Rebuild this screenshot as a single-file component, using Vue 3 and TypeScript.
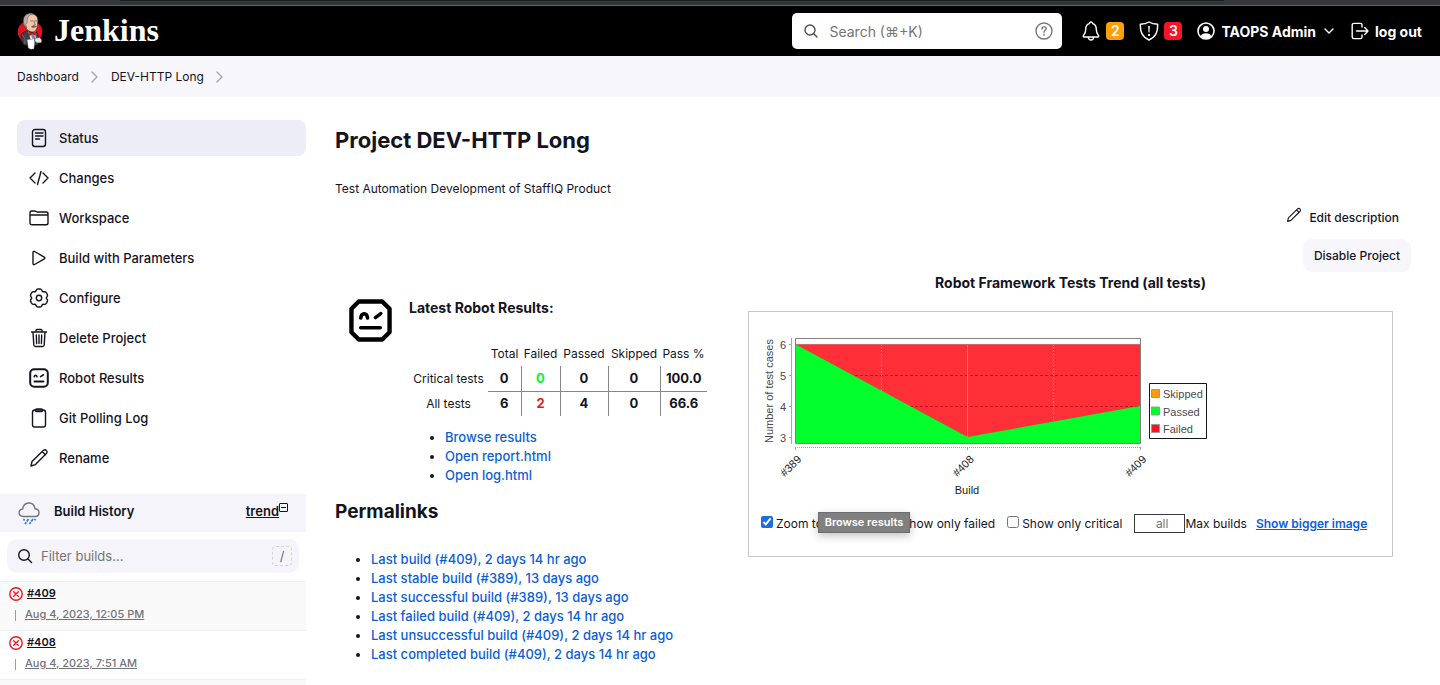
<script setup lang="ts">
import { ref } from 'vue'

interface Task {
  icon: string
  label: string
}

const tasks: Task[] = [
  { icon: 'status', label: 'Status' },
  { icon: 'changes', label: 'Changes' },
  { icon: 'folder', label: 'Workspace' },
  { icon: 'play', label: 'Build with Parameters' },
  { icon: 'gear', label: 'Configure' },
  { icon: 'trash', label: 'Delete Project' },
  { icon: 'robot', label: 'Robot Results' },
  { icon: 'clipboard', label: 'Git Polling Log' },
  { icon: 'pencil', label: 'Rename' },
]

const builds = [
  { id: '#409', date: 'Aug 4, 2023, 12:05 PM' },
  { id: '#408', date: 'Aug 4, 2023, 7:51 AM' },
]

const columns = ['Total', 'Failed', 'Passed', 'Skipped', 'Pass %']
const results = [
  { name: 'Critical tests', values: ['0', '0', '0', '0', '100.0'], tone: 'ok' },
  { name: 'All tests', values: ['6', '2', '4', '0', '66.6'], tone: 'bad' },
]

const reports = ['Browse results', 'Open report.html', 'Open log.html']

const permalinks = [
  'Last build (#409), 2 days 14 hr ago',
  'Last stable build (#389), 13 days ago',
  'Last successful build (#389), 13 days ago',
  'Last failed build (#409), 2 days 14 hr ago',
  'Last unsuccessful build (#409), 2 days 14 hr ago',
  'Last completed build (#409), 2 days 14 hr ago',
]

const zoomToChanges = ref(true)
const onlyFailed = ref(false)
const onlyCritical = ref(false)
const maxBuilds = ref('')

/* Trend chart geometry, in SVG units */
const plot = { left: 34, right: 379, top: 14, bottom: 119, step: 31, base: 113 }
const trend = [
  { build: '#389', passed: 6 },
  { build: '#408', passed: 3 },
  { build: '#409', passed: 4 },
]
const xAt = (i: number): number => plot.left + ((plot.right - plot.left) / 2) * i
const yAt = (n: number): number => plot.base - (n - 3) * plot.step
const passedArea =
  `${plot.left},${plot.bottom} ` +
  trend.map((t, i) => `${xAt(i)},${yAt(t.passed)}`).join(' ') +
  ` ${plot.right},${plot.bottom}`
const ticks = [6, 5, 4, 3]
const legend = [
  { name: 'Skipped', color: '#ff9b0a' },
  { name: 'Passed', color: '#00ff2b' },
  { name: 'Failed', color: '#fa1420' },
]

/* Six-lobed cog outline */
const gearPath =
  Array.from({ length: 90 }, (_, i) => {
    const a = (i / 90) * Math.PI * 2
    const r = 9 - 1.7 * Math.pow((1 + Math.cos(6 * a)) / 2, 3)
    return `${i ? 'L' : 'M'}${(10 + r * Math.cos(a)).toFixed(2)} ${(10 + r * Math.sin(a)).toFixed(2)}`
  }).join('') + 'Z'
</script>

<template>
  <div class="page">
    <div class="window-edge"><span></span></div>
    <header class="header">
      <a href="#" class="brand" aria-label="Jenkins home">
        <svg class="mascot" viewBox="0 0 78 112" aria-hidden="true">
          <ellipse cx="39" cy="57" rx="37" ry="35" fill="#e3121f" />
          <path d="M14 62 28 54 48 60 58 56 64 70 62 96 52 100 20 96 12 82Z" fill="#3d3f45" stroke="#17181b" stroke-width="2" />
          <path d="M32 54 44 66 56 52 58 74 50 84 40 78Z" fill="#e9edf2" />
          <path d="M42 66 52 64 55 78 47 80Z" fill="#7589a3" />
          <path d="M22 12C26 3 40-1 50 4 62 8 64 20 62 30L61 42C58 54 50 59 42 57 32 54 24 44 22 34Z" fill="#eec9a9" stroke="#4b3b35" stroke-width="2" />
          <path d="M22 12C28 2 40 0 48 3 38 5 33 9 31 18L30 30 26 34 30 45C20 40 16 24 22 12Z" fill="#b9b3ac" stroke="#56504c" stroke-width="1.500" />
          <path d="M41 24h7M53 24h6M51 27l4 8-5 2" fill="none" stroke="#5b463c" stroke-width="2" />
          <path d="M42 42c4-5 13-5 18-1-5 4-13 5-18 1Z" fill="#6b625e" />
          <path d="M35 56 46 61 57 56 58 68 47 64 36 69Z" fill="#e3121f" stroke="#6d0d13" stroke-width="1" />
          <path d="M31 81 53 79 51 108 42 110 34 106Z" fill="#fff" stroke="#96999e" stroke-width="1" />
          <path d="M55 76 68 74 75 82 73 90 62 91 54 86Z" fill="#e7e3df" stroke="#55524f" stroke-width="2" />
          <path d="M16 66 24 80 22 94M58 62 55 72" fill="none" stroke="#777b82" stroke-width="2" />
        </svg>
        <span class="brand-name">Jenkins</span>
      </a>
      <div class="header-tools">
        <label class="search">
          <svg viewBox="0 0 16 16" class="i16" aria-hidden="true"><circle cx="7" cy="7" r="5" /><path d="m11 11 3 3" /></svg>
          <input type="search" placeholder="Search (⌘+K)" aria-label="Search" />
          <svg viewBox="0 0 18 18" class="i18 help" aria-hidden="true"><circle cx="9" cy="9" r="8" /><path d="M7 7c0-3 4.200-2.700 4.200-.3C11.200 8.300 9 8.300 9 10.300M9 12.300v1" /></svg>
        </label>
        <a href="#" class="alert" aria-label="Notifications">
          <svg viewBox="0 0 18 20" class="bell" aria-hidden="true"><path d="M9 1C8 1 7.500 2 7.200 2.700 4.600 3.500 3.700 5.700 3.700 8.500 3.700 12 2.800 13 1.500 14.500 1 15.200 1.300 16 2.200 16h13.600c.9 0 1.200-.8.7-1.500C15.200 13 14.300 12 14.300 8.500c0-2.800-.9-5-3.500-5.800C10.500 2 10 1 9 1ZM6.300 16.200c.3 3.700 5.100 3.700 5.400 0" /></svg>
          <span class="count orange">2</span>
        </a>
        <a href="#" class="alert security" aria-label="Security warnings">
          <svg viewBox="0 0 20 20" class="i20" aria-hidden="true"><path d="M10 1C7.500 2.500 4.500 3.200 1.300 3.300c0 8 1.700 12.200 8.700 15.700 7-3.500 8.700-7.700 8.700-15.700C15.500 3.200 12.500 2.500 10 1Z" /><path d="M9.200 5h1.600l-.3 6.500h-1ZM9.100 13h1.800v1.900H9.100Z" class="solid" /></svg>
          <span class="count red">3</span>
        </a>
        <a href="#" class="user">
          <svg viewBox="0 0 18 18" class="i18" aria-hidden="true"><circle cx="9" cy="9" r="8" class="bold-ring" /><circle cx="9" cy="7" r="3" class="solid" /><path d="M3.700 14.500C4.500 10.300 13.500 10.300 14.300 14.500 11.500 17.500 6.500 17.500 3.700 14.500Z" class="solid" /></svg>
          <span>TAOPS Admin</span>
          <svg viewBox="0 0 10 10" class="chevron" aria-hidden="true"><path d="m1 3 4 4 4-4" /></svg>
        </a>
        <a href="#" class="logout">
          <svg viewBox="0 0 18 18" class="i18" aria-hidden="true"><path d="M11 5V3c0-1-.7-1.600-1.600-1.600H3c-1 0-1.800.7-1.800 1.600v12c0 1 .8 1.600 1.800 1.600h6.400c.9 0 1.600-.6 1.600-1.600v-2M5.500 9H17M13.700 5.500 17 9l-3.300 3.500" /></svg>
          <span>log out</span>
        </a>
      </div>
    </header>

    <nav class="crumbs" aria-label="Breadcrumb">
      <a href="#">Dashboard</a>
      <svg viewBox="0 0 8 12" aria-hidden="true"><path d="m1 1 5 5-5 5" /></svg>
      <a href="#">DEV-HTTP Long</a>
      <svg viewBox="0 0 8 12" aria-hidden="true"><path d="m1 1 5 5-5 5" /></svg>
    </nav>

    <div class="body">
      <aside class="side">
        <nav class="tasks" aria-label="Project">
          <a v-for="(t, i) in tasks" :key="t.label" href="#" class="task" :class="{ active: i === 0 }">
            <svg viewBox="0 0 20 20" class="i20" aria-hidden="true">
              <template v-if="t.icon === 'status'"><rect x="3.500" y="1.500" width="13" height="17" rx="2.500" /><path d="M6.500 5h7.500M6.500 8h7.500M6.500 11h4" /></template>
              <path v-else-if="t.icon === 'changes'" d="M6 5 1 10l5 5M14 5l5 5-5 5M12 3.500 8.500 16.500" />
              <path v-else-if="t.icon === 'folder'" d="M1 7V4.500C1 3.500 1.700 3 2.500 3h3.300c1.200 0 1.500 1 2.700 1h8.500c1.200 0 2 .7 2 1.700V15c0 1-.8 1.800-2 1.800H3c-1.200 0-2-.8-2-1.800V7h18" />
              <path v-else-if="t.icon === 'play'" d="M4 4.500v11c0 1 .8 1.400 1.600 1l9.700-5.600c.8-.5.8-1.300 0-1.800L5.600 3.500C4.800 3.100 4 3.500 4 4.500Z" />
              <template v-else-if="t.icon === 'gear'"><path :d="gearPath" /><circle cx="10" cy="10" r="2.700" /></template>
              <path v-else-if="t.icon === 'trash'" d="M2.500 4h15M4 4l.8 13c.1 1 .8 1.500 1.700 1.500h7c.9 0 1.600-.5 1.700-1.500L16 4M7 4V2.500c0-.6.4-1 1-1h4c.6 0 1 .4 1 1V4M7.300 7l.3 8.500M10 7v8.500M12.700 7l-.3 8.500" />
              <g v-else-if="t.icon === 'robot'"><rect x="1.200" y="1.200" width="17.600" height="17.600" rx="4" class="thick" /><path d="M5.200 8.800c.5-2 2.300-2 2.800 0M11.500 8.600l3-1.800" class="bold-ring" /><path d="M5.500 13.500h9" class="thick" /></g>
              <template v-else-if="t.icon === 'clipboard'"><rect x="3.500" y="2" width="13" height="17" rx="2.200" /><rect x="6.500" y="1" width="7" height="2.500" rx="1.200" /></template>
              <path v-else d="M2 18l1-4.500L14.500 2.300c1.800-1.700 4.800 1.100 3.100 3L6.200 16.700ZM13.200 3.600l3.200 3.200" />
            </svg>
            <span>{{ t.label }}</span>
          </a>
        </nav>

        <section class="history">
          <div class="history-head">
            <svg viewBox="0 0 22 24" class="weather" aria-hidden="true"><path d="M6 15.500H5.500C-.3 15.500-.2 8.200 4.700 8 5.600.3 15.700-.2 17 7.700c5.200.1 5.200 7.700.3 7.800H6Z" stroke="#73747c" /><path d="m6.500 18-1 1.500M10.500 18 7 23M15 18l-3.500 5M17.500 18l-.8 1.200" stroke="#2f7de0" stroke-width="1.800" stroke-dasharray="3 1" stroke-linecap="butt" /></svg>
            <h2>Build History</h2>
            <a href="#" class="trend-link">trend</a>
            <button type="button" class="collapse" aria-label="Collapse build history"></button>
          </div>
          <label class="filter">
            <svg viewBox="0 0 16 16" class="i16" aria-hidden="true"><circle cx="7" cy="7" r="5.300" /><path d="m11 11 3.500 3.500" /></svg>
            <input type="search" placeholder="Filter builds..." aria-label="Filter builds" />
            <kbd>/</kbd>
          </label>
          <ul class="builds">
            <li v-for="b in builds" :key="b.id">
              <div class="build-line">
                <svg viewBox="0 0 14 14" class="failed" aria-hidden="true"><circle cx="7" cy="7" r="6.200" /><path d="m4.700 4.700 4.600 4.600M9.300 4.700 4.700 9.300" /></svg>
                <a href="#" class="build-id">{{ b.id }}</a>
              </div>
              <div class="date-line"><a href="#">{{ b.date }}</a></div>
            </li>
            <li class="rest"></li>
          </ul>
        </section>
      </aside>

      <main class="main">
        <h1>Project DEV-HTTP Long</h1>
        <p class="about">Test Automation Development of StaffIQ Product</p>
        <a href="#" class="edit">
          <svg viewBox="0 0 20 20" class="i16" aria-hidden="true"><path d="M2 18l1-4.500L14.500 2.300c1.800-1.700 4.800 1.100 3.100 3L6.200 16.700ZM13.200 3.600l3.200 3.200" /></svg>
          <span>Edit description</span>
        </a>
        <button type="button" class="disable">Disable Project</button>

        <div class="columns">
          <div class="left">
            <section class="latest">
              <svg viewBox="0 0 44 44" class="robot" aria-hidden="true"><path d="M10 2.500h24L41.500 10v24L34 41.500H10L2.500 34V10Z" /><path d="M12 19.500c.5-6 6.500-6 7 0M27 19l5.500-4M12 29.500h20" class="face" /></svg>
              <div>
                <h3>Latest Robot Results:</h3>
                <table>
                  <thead>
                    <tr>
                      <td class="c0"></td>
                      <th v-for="(c, i) in columns" :key="c" scope="col" :class="'c' + (i + 1)">{{ c }}</th>
                    </tr>
                  </thead>
                  <tbody>
                    <tr v-for="r in results" :key="r.name">
                      <th scope="row">{{ r.name }}</th>
                      <td v-for="(v, i) in r.values" :key="i" :class="i === 1 ? r.tone : ''">{{ v }}</td>
                    </tr>
                  </tbody>
                </table>
                <ul class="links">
                  <li v-for="l in reports" :key="l"><a href="#">{{ l }}</a></li>
                </ul>
              </div>
            </section>
            <h2 class="perma">Permalinks</h2>
            <ul class="links">
              <li v-for="l in permalinks" :key="l"><a href="#">{{ l }}</a></li>
            </ul>
          </div>

          <section class="trend">
            <h3>Robot Framework Tests Trend (all tests)</h3>
            <div class="panel">
              <svg class="chart" width="500" height="178" viewBox="0 0 500 178" role="img" aria-label="Number of test cases by build">
                <rect :x="plot.left" :y="yAt(6)" :width="plot.right - plot.left" :height="plot.bottom - yAt(6)" fill="#ff2f37" />
                <g stroke="#c7111d" stroke-dasharray="3 2">
                  <line v-for="n in [5, 4]" :key="n" :x1="plot.left" :x2="plot.right" :y1="yAt(n) + 0.5" :y2="yAt(n) + 0.5" />
                </g>
                <g stroke="#f0706f">
                  <line v-for="i in [0.5, 1, 1.5]" :key="i" :x1="Math.floor(xAt(i)) + 0.5" :x2="Math.floor(xAt(i)) + 0.5" :y1="yAt(6)" :y2="plot.bottom" :stroke-dasharray="i === 1 ? 'none' : '2 1'" />
                </g>
                <polygon :points="passedArea" fill="#00ff2b" />
                <path :d="`M${plot.left} ${yAt(6) + 0.5}H${plot.right}`" stroke="#d8656b" />
                <rect :x="plot.left + 0.5" :y="plot.top + 0.5" :width="plot.right - plot.left" :height="plot.bottom - plot.top" fill="none" stroke="#808080" />
                <path d="M30.500 14V120" stroke="#a8a8a8" />
                <path d="M34 123.500H380" stroke="#a8a8a8" stroke-dasharray="1 1" />
                <path v-for="n in ticks" :key="'t' + n" :d="`M28 ${yAt(n) + 0.5}h3`" stroke="#a8a8a8" />
                <path v-for="(t, i) in trend" :key="'x' + t.build" :d="`M${Math.floor(xAt(i)) + 0.5} 123v3`" stroke="#a8a8a8" />
                <text v-for="n in ticks" :key="n" x="25" :y="yAt(n) + 5" text-anchor="end" class="tick">{{ n }}</text>
                <text transform="translate(12 67) rotate(-90)" text-anchor="middle" class="axis">Number of test cases</text>
                <text v-for="(t, i) in trend" :key="t.build" :transform="`translate(${xAt(i) + 7} 136) rotate(-45)`" text-anchor="end" class="axis dark">{{ t.build }}</text>
                <text x="206" y="170" text-anchor="middle" class="axis dark">Build</text>
                <rect x="388.500" y="59.500" width="57" height="55" fill="#fff" stroke="#16161c" />
                <g v-for="(l, i) in legend" :key="l.name">
                  <rect x="390.500" :y="65.5 + i * 17.5" width="8" height="8" :fill="l.color" stroke="#999" />
                  <text x="402" :y="74 + i * 17.5" class="tick">{{ l.name }}</text>
                </g>
              </svg>
              <div class="controls">
                <label><input v-model="zoomToChanges" type="checkbox" />Zoom to changes</label>
                <label><input v-model="onlyFailed" type="checkbox" />Show only failed</label>
                <label><input v-model="onlyCritical" type="checkbox" />Show only critical</label>
                <label class="max"><input v-model="maxBuilds" type="text" placeholder="all" />Max builds</label>
                <a href="#">Show bigger image</a>
              </div>
              <div class="tooltip" role="tooltip">Browse results</div>
            </div>
          </section>
        </div>
      </main>
    </div>
  </div>
</template>

<style>
html,
body {
  background: #fff;
}
</style>

<style scoped>
* {
  box-sizing: border-box;
}
.page {
  min-height: 100vh;
  display: flex;
  flex-direction: column;
  font-family: Inter, "Liberation Sans", sans-serif;
  font-size: 13px;
  line-height: 19px;
  color: #14141f;
}
a {
  color: inherit;
  text-decoration: none;
}
h1,
h2,
h3,
p,
ul {
  margin: 0;
  padding: 0;
}
input,
button {
  font-family: inherit;
}
svg {
  fill: none;
  stroke: currentColor;
  stroke-width: 1.4;
  stroke-linecap: round;
  stroke-linejoin: round;
  flex: none;
}
.i16 {
  width: 16px;
  height: 16px;
}
.i18 {
  width: 18px;
  height: 18px;
}
.i20 {
  width: 20px;
  height: 20px;
}
.window-edge {
  height: 6px;
  background: #35363b;
  border-bottom: 1px solid #63645f;
}
.window-edge span {
  display: block;
  height: 1px;
  margin: 0 15% 0 120px;
  background: #1d1e22;
}
.header {
  height: 50px;
  padding: 0 18px 0 17px;
  display: flex;
  align-items: center;
  justify-content: space-between;
  background: #000;
  color: #fff;
}
.brand {
  display: flex;
  align-items: center;
  gap: 11px;
}
.mascot {
  width: 26px;
  height: 37px;
  stroke: none;
}
.brand-name {
  margin-bottom: 2px;
  font-family: "Liberation Serif", serif;
  font-weight: 700;
  font-size: 32px;
  line-height: 36px;
}
.header-tools {
  display: flex;
  align-items: center;
  font-size: 14px;
  font-weight: 700;
}
.search {
  width: 270px;
  height: 36px;
  margin-right: 20px;
  padding: 0 9px 0 11px;
  display: flex;
  align-items: center;
  gap: 10px;
  border-radius: 5px;
  background: #fff;
  color: #4d4d57;
}
.search input,
.filter input {
  flex: 1;
  min-width: 0;
  padding: 0;
  border: 0;
  outline: 0;
  background: transparent;
}
.search input {
  font-size: 14px;
}
.help {
  color: #777780;
}
.alert {
  display: flex;
  align-items: center;
  gap: 6px;
  margin-right: 15px;
}
.security {
  gap: 5px;
}
.bell {
  width: 18px;
  height: 20px;
}
.count {
  width: 18px;
  height: 18px;
  border-radius: 4px;
  font-size: 14px;
  font-weight: 600;
  line-height: 18px;
  text-align: center;
}
.orange {
  background: #ff9f0a;
}
.red {
  background: #fa1428;
}
.thick {
  stroke-width: 2;
}
.bold-ring {
  stroke-width: 1.6;
}
.solid {
  fill: #fff;
  stroke: none;
}
.user,
.logout {
  display: flex;
  align-items: center;
  gap: 6px;
}
.user {
  margin-right: 17px;
}
.user .chevron {
  width: 10px;
  height: 10px;
  margin-left: 2px;
}
.crumbs {
  height: 41px;
  padding: 0 17px;
  display: flex;
  align-items: center;
  gap: 12px;
  background: #f7f7fb;
  font-size: 12px;
}
.crumbs svg {
  width: 8px;
  height: 12px;
  color: #a5a5ad;
}
.body {
  flex: 1;
  display: flex;
  gap: 29px;
}
.side {
  width: 306px;
  flex: none;
  display: flex;
  flex-direction: column;
}
.tasks {
  padding: 23px 0 0 17px;
  display: flex;
  flex-direction: column;
  gap: 4px;
}
.task {
  height: 36px;
  padding: 0 12px;
  display: flex;
  align-items: center;
  gap: 10px;
  border-radius: 8px;
  font-weight: 500;
}
.active {
  background: #ecedf6;
}
.history {
  flex: 1;
  display: flex;
  flex-direction: column;
  margin-top: 18px;
}
.history-head {
  height: 38px;
  padding: 0 18px;
  display: flex;
  align-items: center;
  background: #f4f4fa;
}
.history-head h2 {
  flex: 1;
  margin: 0 0 4px 14px;
  font-size: 13px;
  font-weight: 600;
}
.weather {
  width: 22px;
  height: 24px;
}
.trend-link {
  margin-bottom: 4px;
  font-weight: 600;
  text-decoration: underline;
}
.collapse {
  width: 9px;
  height: 9px;
  padding: 0;
  margin-bottom: 12px;
  display: flex;
  align-items: center;
  justify-content: center;
  border: 1px solid #14141f;
  border-radius: 1px;
  background: transparent;
}
.collapse::before {
  content: "";
  width: 5px;
  height: 1px;
  background: #14141f;
}
.filter {
  height: 34px;
  margin: 7px 7px 8px;
  padding: 0 7px 0 10px;
  display: flex;
  align-items: center;
  gap: 8px;
  border-radius: 10px;
  background: #f4f4fa;
}
.filter input {
  font-size: 13px;
}
.filter kbd {
  width: 20px;
  height: 20px;
  border: 1px dashed #d2d2da;
  border-radius: 4px;
  font: inherit;
  line-height: 18px;
  text-align: center;
  color: #6e6e78;
}
.builds {
  flex: 1;
  display: flex;
  flex-direction: column;
  list-style: none;
}
.builds li {
  height: 49px;
  padding: 2px 9px 0;
  border-top: 1px solid #f0f0f2;
}
.builds li:nth-child(odd) {
  background: #f9f9f9;
}
.builds .rest {
  flex: 1;
  height: auto;
  padding: 0;
}
.build-line {
  display: flex;
  align-items: center;
  gap: 4px;
}
.failed {
  width: 14px;
  height: 14px;
  color: #f01420;
}
.build-id {
  font-size: 11px;
  font-weight: 600;
  text-decoration: underline;
}
.date-line {
  margin: 2px 0 0 6px;
  display: flex;
  align-items: center;
  font-size: 11px;
  font-weight: 500;
  color: #73737a;
}
.date-line::before {
  content: "";
  width: 1px;
  height: 11px;
  margin: 2px 9px 0 0;
  background: #9c9ca3;
}
.date-line a {
  text-decoration: underline;
}
.main {
  flex: 1;
  min-width: 0;
  padding: 29px 29px 20px 0;
  display: flex;
  flex-direction: column;
}
h1 {
  font-size: 22px;
  line-height: 28px;
  font-weight: 700;
}
.about {
  margin-top: 25px;
  font-size: 12px;
}
.edit {
  align-self: flex-end;
  margin: 9px 12px 0 0;
  display: flex;
  align-items: center;
  gap: 7px;
  font-size: 12px;
  font-weight: 500;
}
.edit svg {
  margin-bottom: 4px;
}
.disable {
  align-self: flex-end;
  height: 33px;
  margin-top: 12px;
  padding: 0 11px;
  border: 0;
  border-radius: 9px;
  background: #f7f7fb;
  color: inherit;
  font-size: 12px;
  font-weight: 500;
}
.columns {
  display: flex;
  justify-content: space-between;
  margin-right: 18px;
}
.latest {
  display: flex;
  gap: 17px;
  margin: 26px 0 0 14px;
}
.robot {
  width: 43px;
  height: 43px;
  color: #000;
  stroke-width: 4.5;
  margin-top: 1px;
}
.face {
  stroke-width: 3.6;
}
h3 {
  font-size: 14px;
  font-weight: 700;
}
table {
  margin: 24px 0 0;
  border-collapse: collapse;
  table-layout: fixed;
  width: 298px;
  text-align: center;
}
th,
td {
  height: 25px;
  padding: 0;
  white-space: nowrap;
}
th {
  font-weight: 400;
  font-size: 12px;
}
td {
  font-weight: 700;
}
tbody td + td {
  border-left: 1px solid #868686;
}
tbody tr:last-child td {
  border-top: 1px solid #868686;
}
.c0 {
  width: 79px;
}
.c1 {
  width: 33px;
}
.c2 {
  width: 39px;
}
.c3 {
  width: 48px;
}
.c4 {
  width: 52px;
}
.c5 {
  width: 47px;
}
.ok {
  color: #14f028;
}
.bad {
  color: #f01420;
}
.links {
  padding-left: 36px;
  font-weight: 500;
}
.latest .links {
  margin-top: 12px;
}
.links a {
  color: #0b5fd6;
}
.perma {
  margin: 14px 0 25px;
  font-size: 19px;
  line-height: 26px;
  font-weight: 700;
}
.trend {
  width: 645px;
  padding-top: 1px;
}
.trend h3 {
  text-align: center;
}
.panel {
  position: relative;
  margin-top: 19px;
  padding: 12px 12px 23px;
  border: 1px solid #c8c8c8;
}
.chart {
  display: block;
  stroke: none;
}
.chart g,
.chart path,
.chart rect,
.chart line {
  stroke-width: 1;
  stroke-linecap: butt;
}
.chart text {
  stroke: none;
  font-family: "Liberation Sans", sans-serif;
  font-size: 11px;
  fill: #4a4a50;
}
.chart .dark {
  fill: #1a1a1f;
}
.controls {
  margin-top: 12px;
  display: flex;
  align-items: center;
  gap: 12px;
  font-size: 12px;
  white-space: nowrap;
}
.controls label {
  display: flex;
  align-items: center;
}
.controls [type="checkbox"] {
  width: 12px;
  height: 12px;
  margin: 0 3px 4px 0;
  accent-color: #1a6fe0;
}
.max {
  margin-right: -3px;
}
.max input {
  width: 51px;
  height: 19px;
  padding: 0 16px 0 2px;
  border: 1px solid #3a3a42;
  font-size: 12px;
  text-align: right;
}
.controls a {
  color: #0b5fd6;
  font-weight: 600;
  text-decoration: underline;
}
.tooltip {
  position: absolute;
  left: 69px;
  top: 200px;
  width: 92px;
  height: 21px;
  border: 1px solid #6d6d6d;
  background: #808080;
  color: #fff;
  font-size: 11px;
  line-height: 19px;
  font-weight: 600;
  text-align: center;
  box-shadow: 0 3px 8px #14141f40;
}
</style>
